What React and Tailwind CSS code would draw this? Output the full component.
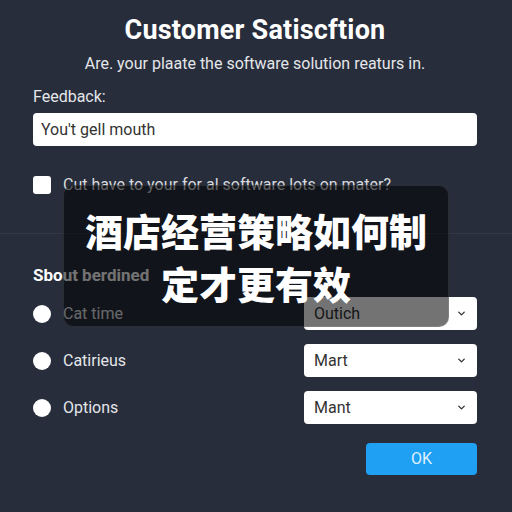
import React from "react";

const Chevron = () => (
  <svg width="11" height="11" viewBox="0 0 24 24" fill="none" stroke="#333" strokeWidth="3" strokeLinecap="round" strokeLinejoin="round">
    <path d="M6 9l6 6 6-6" />
  </svg>
);

const rows = [
  { label: "Cat time", value: "Outich" },
  { label: "Catirieus", value: "Mart" },
  { label: "Options", value: "Mant" },
];

const App = () => {
  return (
    <div className="relative w-[512px] h-[512px] overflow-hidden bg-[#272d3b] pl-[33px] pr-[35px] font-['Roboto',sans-serif] text-white">
      {/* Header */}
      <h1 className="pt-[13px] text-center text-[27px] leading-[34px] font-bold tracking-[0.2px] text-white">Customer Satiscftion</h1>
      <p className="mt-[7px] text-center text-[16px] leading-[20px] text-[#e4e6ea]">Are. your plaate the software solution reaturs in.</p>

      {/* Feedback */}
      <label className="mt-[13px] block text-[16px] leading-[20px] text-[#e4e6ea]">Feedback:</label>
      <div className="mt-[6px] flex h-[33px] items-center rounded-[4px] bg-white px-[8px] text-[16px] text-[#333]">You't gell mouth</div>

      <div className="mt-[29px] flex h-[20px] items-center gap-[12px]">
        <span className="h-[18px] w-[18px] rounded-[3px] bg-white" />
        <span className="text-[16px] text-[#d8dade]">Cut have to your for al software lots on mater?</span>
      </div>

      <div className="mt-[38px] -ml-[33px] -mr-[35px] h-px bg-white/5" />

      <h2 className="mt-[31px] text-[17px] leading-[20px] font-bold text-white">Sbout berdined</h2>

      {/* Options */}
      <div className="mt-[12px] flex flex-col gap-[14px]">
        {rows.map((r) => (
          <div key={r.label} className="flex h-[33px] items-center">
            <span className="h-[18px] w-[18px] rounded-full bg-white" />
            <span className="ml-[12px] flex-1 text-[16px] text-[#e4e6ea]">{r.label}</span>
            <div className="flex h-[33px] w-[173px] items-center justify-between rounded-[4px] bg-white pl-[10px] pr-[10px] text-[16px] text-[#333]">
              {r.value}
              <Chevron />
            </div>
          </div>
        ))}
      </div>

      <div className="mt-[19px] flex justify-end">
        <button className="h-[32px] w-[111px] rounded-[4px] bg-[#1fa0f2] text-[16px] text-[#dff1ff]">OK</button>
      </div>

      {/* Caption overlay */}
      <div className="absolute left-[63px] top-[185px] flex h-[142px] w-[386px] flex-col items-center justify-center rounded-[10px] border border-white/10 bg-black/55">
        <p className="text-center text-[38px] leading-[53px] font-black text-white font-['Noto_Sans_CJK_SC',sans-serif]">
          酒店经营策略如何制
          <br />
          定才更有效
        </p>
      </div>
    </div>
  );
};

export default App;
